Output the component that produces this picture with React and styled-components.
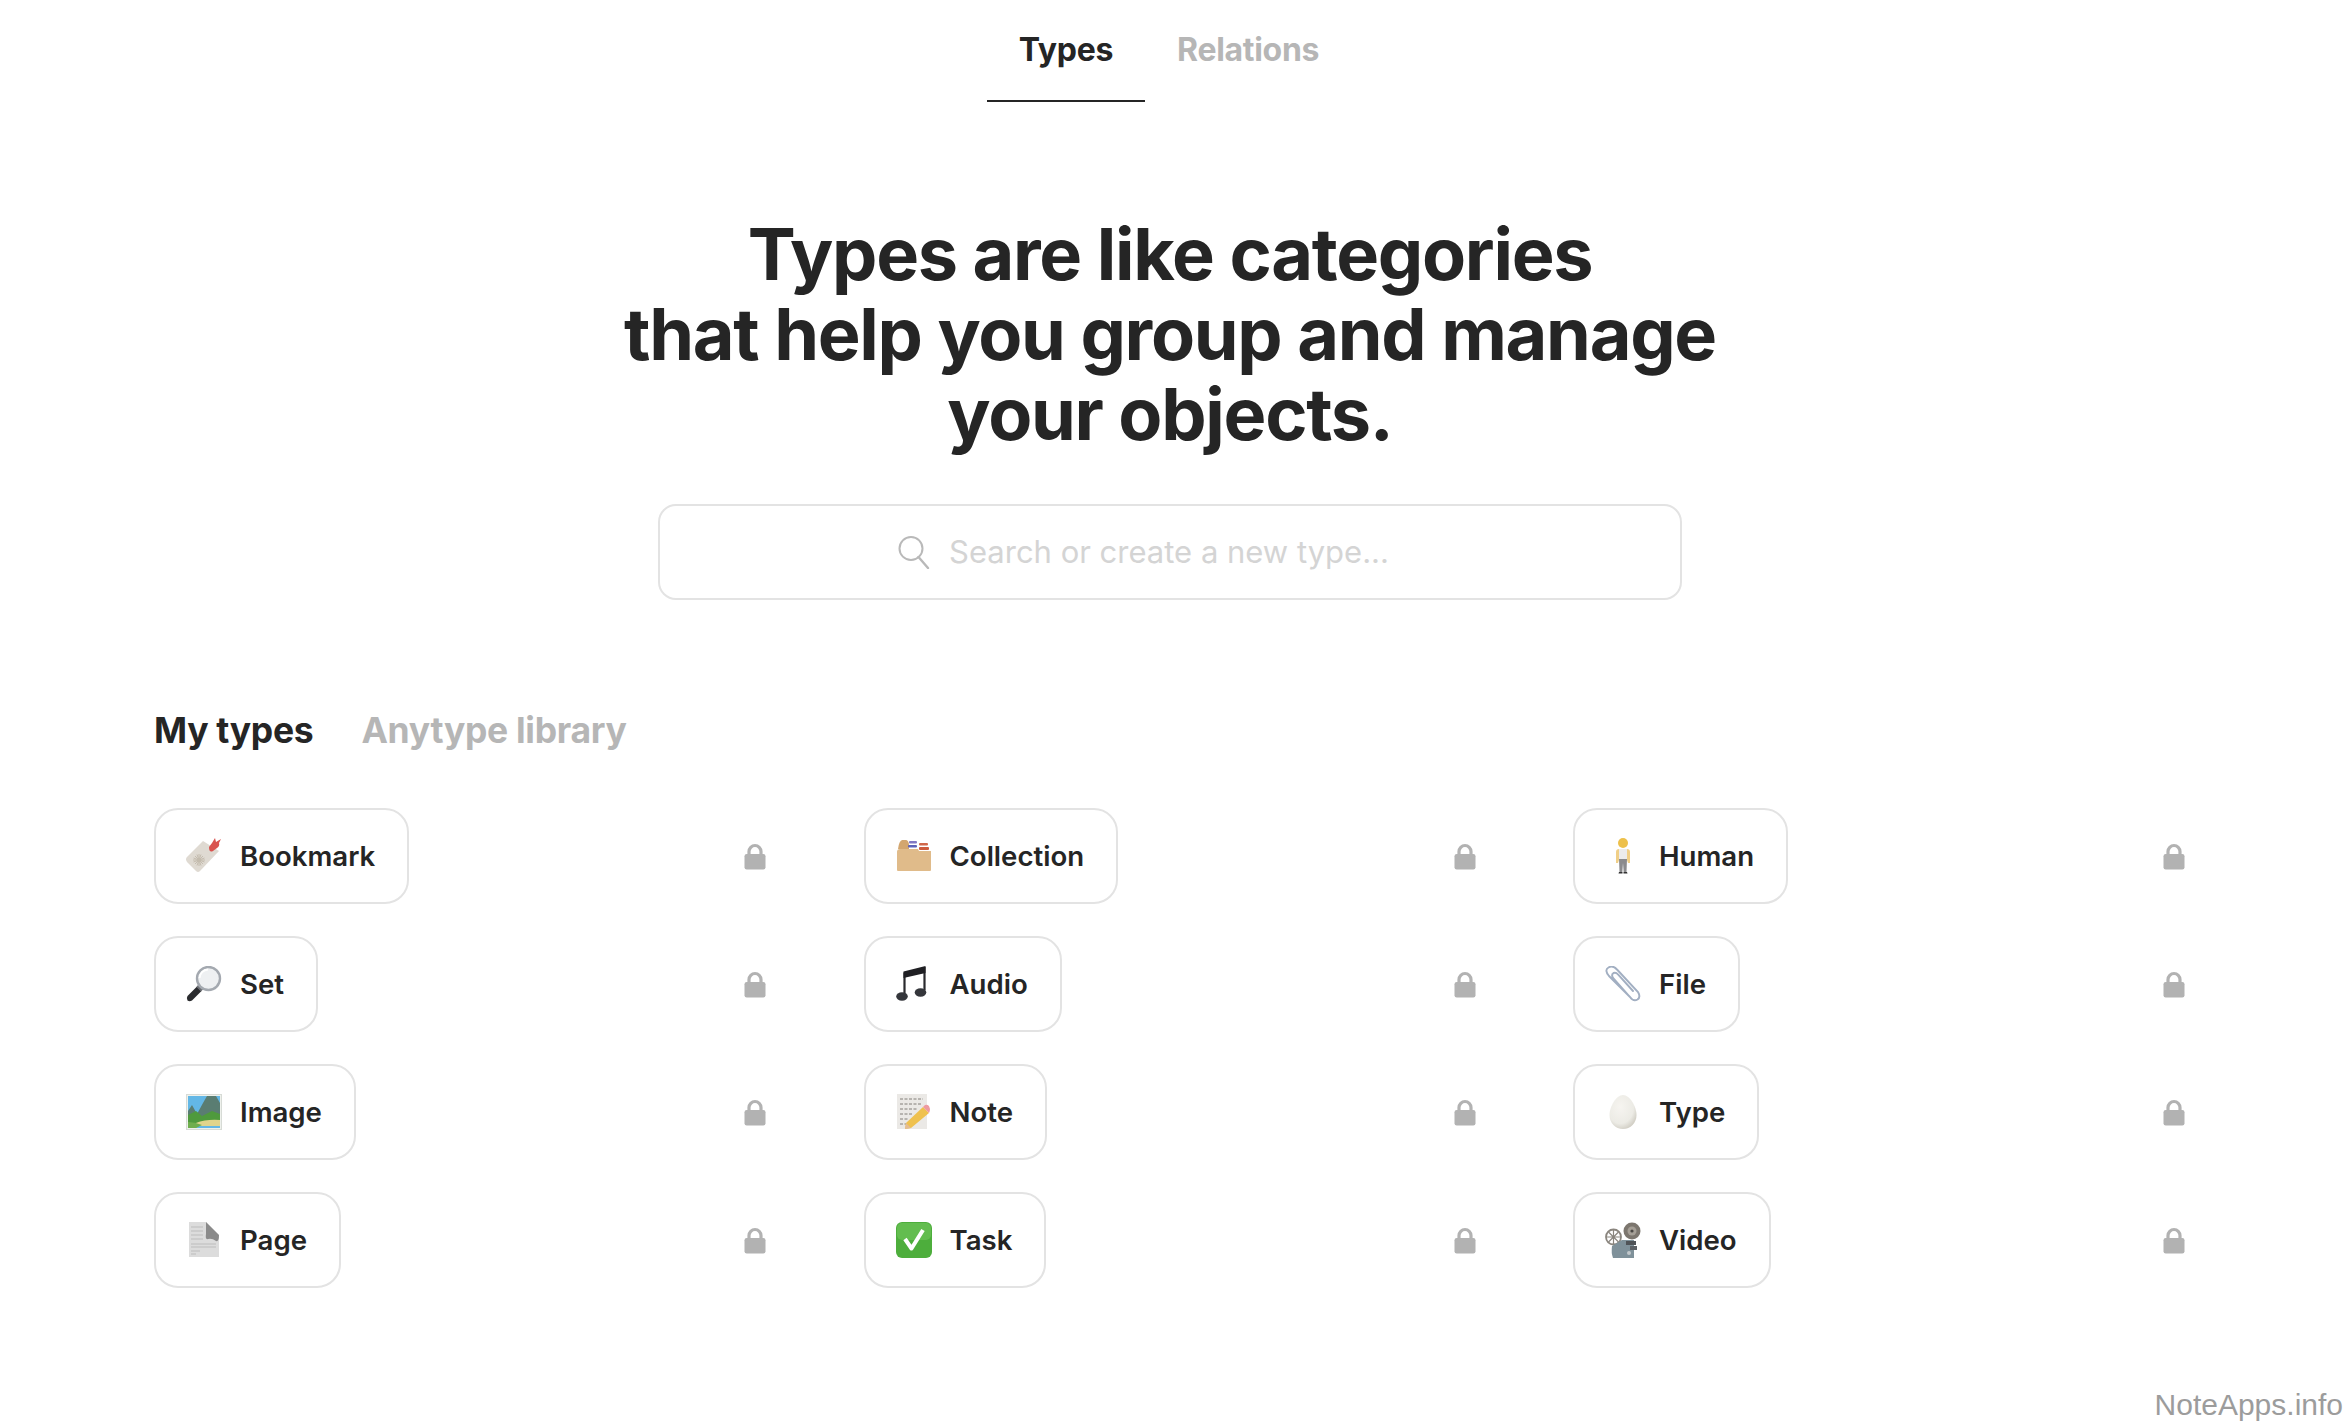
import React from "react";
import styled, { createGlobalStyle } from "styled-components";

const Global = createGlobalStyle`
  html, body { margin: 0; padding: 0; background: #fff; }
  body { font-family: Inter, "Liberation Sans", sans-serif; color: #252525; }
`;

const Page = styled.div`
  position: relative;
  width: 2346px;
  height: 1424px;
  overflow: hidden;
  background: #fff;
`;
const TopTabs = styled.nav`
  display: flex;
  justify-content: center;
  height: 102px;
  padding-right: 8px;
`;
const TopTab = styled.div`
  height: 102px;
  padding: 0 32px 1px;
  box-sizing: border-box;
  display: flex;
  align-items: center;
  font-size: 32px;
  font-weight: 650;
  letter-spacing: -0.3px;
  color: ${(p) => (p.$active ? "#252525" : "#b6b6b6")};
  border-bottom: 2px solid ${(p) => (p.$active ? "#252525" : "transparent")};
`;
const Title = styled.h1`
  margin: 112px 6px 0 0;
  text-align: center;
  font-size: 72px;
  line-height: 80px;
  font-weight: 700;
  letter-spacing: -1.28px;
  color: #252525;
`;
const SearchBox = styled.div`
  box-sizing: border-box;
  width: 1024px;
  height: 96px;
  margin: 50px 0 0 658px;
  padding-right: 54px;
  border: 2px solid #e3e3e3;
  border-radius: 18px;
  display: flex;
  align-items: center;
  justify-content: center;
  gap: 18px;
  font-size: 31px;
  color: #d4d4d4;
`;
const SearchText = styled.span`
  line-height: 40px;
`;
const SubTabs = styled.div`
  display: flex;
  gap: 48px;
  margin: 105px 0 0 154px;
  height: 50px;
  align-items: center;
`;
const SubTab = styled.div`
  font-size: 35.5px;
  font-weight: 650;
  letter-spacing: -0.3px;
  color: ${(p) => (p.$active ? "#252525" : "#b6b6b6")};
`;
const Grid = styled.div`
  display: grid;
  grid-template-columns: repeat(3, 613px);
  column-gap: 96.5px;
  row-gap: 32px;
  margin: 53px 0 0 154px;
`;
const Row = styled.div`
  display: flex;
  align-items: center;
  justify-content: space-between;
  height: 96px;
`;
const Chip = styled.div`
  box-sizing: border-box;
  height: 96px;
  display: flex;
  align-items: center;
  gap: 18px;
  padding: 0 32px 0 30px;
  border: 2px solid #e3e3e3;
  border-radius: 24px;
  font-size: 27.6px;
  font-weight: 600;
  color: #252525;
`;
const EmojiBox = styled.svg`
  width: 36px;
  height: 36px;
  flex: none;
`;
const LockIcon = styled.svg`
  width: 24px;
  height: 28px;
  margin: 2px 0 0 0;
  flex: none;
`;
const Watermark = styled.div`
  position: absolute;
  right: 3px;
  bottom: -3px;
  font-family: "Liberation Sans", Arial, sans-serif;
  font-size: 30px;
  line-height: 44px;
  color: #9c9c9c;
`;
const SearchIcon = styled.svg`
  width: 34px;
  height: 34px;
  flex: none;
`;

const Emoji = ({ children, label }) => (
  <EmojiBox viewBox="0 0 36 36" role="img" aria-label={label}>
    {children}
  </EmojiBox>
);

const Lock = () => (
  <LockIcon viewBox="0 0 24 28">
    <path d="M6 13V8.500a6 6 0 0 1 12 0V13" fill="none" stroke="#b2b2b2" strokeWidth="3.200" />
    <rect x="1.500" y="11" width="21" height="15.500" rx="2.200" fill="#b2b2b2" />
  </LockIcon>
);

const icons = {
  Bookmark: (
    <Emoji label="label">
      <path d="M1 19 L17 3 L33 13 L14 33 Q12 35 10 33 L1 24 Q-1 21 1 19 Z" fill="#dfdad2" />
      <g stroke="#c4bcae" strokeWidth="1">
        <path d="M13 16 L13 28M7 22 L19 22M9 18 L17 26M17 18 L9 26M11 16.500 L15 27.500M7.500 20 L18.500 24M7.500 24 L18.500 20M15 16.500 L11 27.500" />
      </g>
      <path d="M23 9 Q23 15 27 13 L31 10 Q34 8 33 5 L35 1 L30 4 L29 0 L26 5 Z" fill="#d9534f" />
    </Emoji>
  ),
  Set: (
    <Emoji label="magnifier">
      <path d="M1.500 30 L11 20.500 L15.500 25 L6 34.500 Q3.500 36 1.500 34.500 Q0 32.500 1.500 30 Z" fill="#2a2b2e" />
      <path d="M10.500 21 L13 17.500 L18 22.500 L15 25.500 Z" fill="#6a6d72" />
      <circle cx="22.500" cy="12.500" r="11.500" fill="#eef0f2" stroke="#a4a9b0" strokeWidth="2.400" />
      <path d="M13.500 12 A9 9 0 0 1 22 3.500" fill="none" stroke="#fff" strokeWidth="2" />
    </Emoji>
  ),
  Image: (
    <Emoji label="landscape">
      <rect x="0.500" y="0.500" width="35" height="35" fill="#eef1ec" stroke="#d7dbd6" />
      <rect x="2" y="2" width="32" height="32" fill="#63b7e6" />
      <path d="M2 17 L6 11 L11 20 L17 9 L21 2 H30 L34 9 V26 H2 Z" fill="#5a7d72" />
      <path d="M2 21 L10 17 L16 22 L26 17 L34 20 V30 H2 Z" fill="#4f9a3d" />
      <path d="M10 29 Q20 25 34 26 V32 H2 Z" fill="#e0d48c" />
      <path d="M2 28 Q9 28 16 31 L10 34 H2 Z" fill="#6fae4d" />
    </Emoji>
  ),
  Page: (
    <Emoji label="page">
      <path d="M3 0 H20 L33 13 V35 H3 Z" fill="#dcdcdc" />
      <path d="M20 0 L33 13 Q33 20 30 19 Q26 16 22 17 Q19 18 20 12 Z" fill="#8a8a8a" />
      <g stroke="#bcbcbc" strokeWidth="1">
        <path d="M5 5 H17M5 9 H17M5 13 H17M5 17 H17M5 22 H30M5 25 H30M5 29 H14M5 32 H10" />
      </g>
    </Emoji>
  ),
  Collection: (
    <Emoji label="card index">
      <path d="M2 11 Q3 3 6 2 H10 Q12 2 13 6 V11 Z" fill="#d3a66f" />
      <rect x="13" y="3" width="8" height="2.500" rx="1" fill="#8178c4" />
      <rect x="12" y="7" width="9" height="2.500" rx="1" fill="#5d62b8" />
      <rect x="23" y="5" width="9" height="2.500" rx="1" fill="#d0674a" />
      <rect x="23" y="9" width="10" height="3" rx="1" fill="#cc5a3c" />
      <path d="M1 14 Q1 11 4 11 H22 L23 13 H35 V32 Q35 33 34 33 H2 Q1 33 1 32 Z" fill="#e0bb8a" />
    </Emoji>
  ),
  Audio: (
    <Emoji label="music">
      <path d="M8.500 28 V6.500 M28.500 1 V24" fill="none" stroke="#2a2a2e" strokeWidth="2.200" />
      <path d="M7.500 5.500 L29.500 0 V7 L7.500 12 Z" fill="#1f1f23" />
      <ellipse cx="6" cy="30.500" rx="5.800" ry="4.200" fill="#34363b" />
      <ellipse cx="24.500" cy="26.500" rx="5.800" ry="4.200" fill="#34363b" />
    </Emoji>
  ),
  Note: (
    <Emoji label="memo">
      <rect x="1" y="0" width="30" height="35" fill="#ebe9e6" />
      <g stroke="#77736d" strokeWidth="0.900" strokeDasharray="3 1.500">
        <path d="M4 5 H27M4 10 H25M4 15 H22M4 20 H17M4 25 H12M4 30 H11" />
      </g>
      <path d="M10 29 L27 13 L33 19 L15 34 L9 35 Z" fill="#efc14e" />
      <path d="M10 29 L15 34 L9 35 Z" fill="#e4bc94" />
      <path d="M27 13 L29 11 Q31 10 33 12 L34 15 Q34 17 33 19 Z" fill="#ee9aa0" />
    </Emoji>
  ),
  Task: (
    <Emoji label="check">
      <rect x="0" y="0" width="36" height="36" rx="6" fill="#4dae3c" />
      <rect x="1" y="1" width="34" height="17" rx="5" fill="#63bd4f" />
      <path d="M9 17 L15.500 26.500 L27 8" fill="none" stroke="#fff" strokeWidth="4" strokeLinejoin="round" />
    </Emoji>
  ),
  Human: (
    <Emoji label="person">
      <circle cx="18" cy="5" r="5" fill="#edc04a" />
      <path d="M14 11 H22 Q25 11 25 14 V25 H23 L22 22 H14 L13 25 H11 V14 Q11 11 14 11 Z" fill="#f0cf87" />
      <rect x="14" y="11" width="8" height="11" fill="#ececec" />
      <path d="M14 21 H22 L21.500 34 H18.700 L18 25 L17.300 34 H14.500 Z" fill="#8b8b8d" />
      <path d="M14 34 H17.500 V35.500 H13.500 ZM18.500 34 H22 L22.500 35.500 H18.500 Z" fill="#333" />
    </Emoji>
  ),
  File: (
    <Emoji label="paperclip">
      <path d="M25 31 L4 10 Q-1 4 3.500 1.500 Q8 -1 12 3.500 L33 26 Q36 31 32.500 33.500 Q28.500 36 25 31 L8 12 Q6 8.500 8.500 7 Q11 6 13 8.500 L28 25" fill="none" stroke="#a2afc2" strokeWidth="1.900" strokeLinecap="round" />
    </Emoji>
  ),
  Type: (
    <Emoji label="egg">
      <defs>
        <radialGradient id="egg" cx="40%" cy="35%" r="70%">
          <stop offset="0%" stopColor="#f6f4f0" />
          <stop offset="70%" stopColor="#ecebe5" />
          <stop offset="100%" stopColor="#cfccc2" />
        </radialGradient>
      </defs>
      <path d="M18 1 C25 1 31.500 13 31.500 21 C31.500 29 25.500 35 18 35 C10.500 35 4.500 29 4.500 21 C4.500 13 11 1 18 1 Z" fill="url(#egg)" />
    </Emoji>
  ),
  Video: (
    <Emoji label="projector">
      <circle cx="8.500" cy="15" r="7.500" fill="none" stroke="#8a857e" strokeWidth="1.800" />
      <path d="M8.500 8 V22M1 15 H16M3.500 10 L13.500 20M13.500 10 L3.500 20" stroke="#8a857e" strokeWidth="1.200" />
      <circle cx="27" cy="9" r="8.500" fill="#7c766e" />
      <circle cx="27" cy="9" r="4.500" fill="#a59f96" />
      <circle cx="27" cy="9" r="1.600" fill="#4a4743" />
      <path d="M7 24 L17 18 H29 V36 H8 Q6 31 7 24 Z" fill="#7f919a" />
      <rect x="21" y="19" width="10" height="4" fill="#4f5357" />
      <rect x="25" y="24" width="7" height="4" fill="#5c6166" />
      <circle cx="24" cy="31" r="2" fill="#c2c8cb" />
    </Emoji>
  ),
};

const rows = [
  ["Bookmark", "Collection", "Human"],
  ["Set", "Audio", "File"],
  ["Image", "Note", "Type"],
  ["Page", "Task", "Video"],
];

export default function App() {
  return (
    <Page>
      <Global />
      <TopTabs>
        <TopTab $active>Types</TopTab>
        <TopTab>Relations</TopTab>
      </TopTabs>
      <Title>
        Types are like categories
        <br />
        that help you group and manage
        <br />
        your objects.
      </Title>
      <SearchBox>
        <SearchIcon viewBox="0 0 34 34">
          <circle cx="14" cy="13.500" r="11.500" fill="none" stroke="#b9b9b9" strokeWidth="2" />
          <path d="M21.500 22 L31 33" stroke="#b9b9b9" strokeWidth="2.400" strokeLinecap="round" />
        </SearchIcon>
        <SearchText>Search or create a new type...</SearchText>
      </SearchBox>
      <SubTabs>
        <SubTab $active>My types</SubTab>
        <SubTab>Anytype library</SubTab>
      </SubTabs>
      <Grid>
        {rows.flat().map((name) => (
          <Row key={name}>
            <Chip>
              {icons[name]}
              {name}
            </Chip>
            <Lock />
          </Row>
        ))}
      </Grid>
      <Watermark>NoteApps.info</Watermark>
    </Page>
  );
}
